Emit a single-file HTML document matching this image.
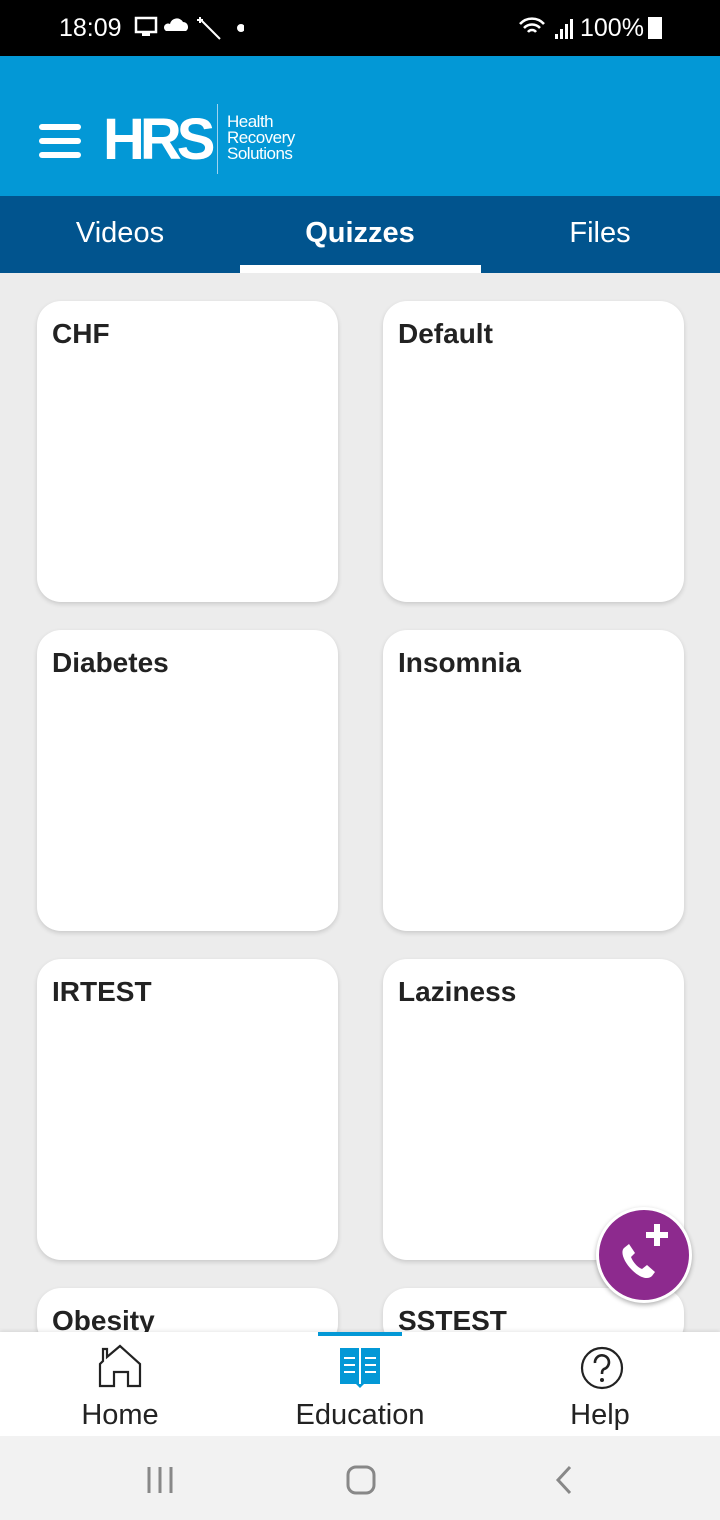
<!DOCTYPE html>
<html style="width:720px;height:1520px;overflow:hidden"><head><meta charset="utf-8"><style>
*{margin:0;padding:0;box-sizing:border-box}
body{width:720px;height:1520px;overflow:hidden;background:#ececec;font-family:"Liberation Sans","DejaVu Sans",sans-serif;position:relative}
.sb{position:absolute;top:0;left:0;width:720px;height:56px;background:#000;color:#fff;font-size:25px}
.hdr{position:absolute;top:56px;left:0;width:720px;height:140px;background:#0398d6}
.tabs{position:absolute;top:196px;left:0;width:720px;height:77px;background:#01548e;color:#fff;font-size:29px}
.tabs div{position:absolute;top:21px;width:240px;text-align:center}
.card{position:absolute;width:301px;height:301px;background:#fff;border-radius:24px;box-shadow:0 2px 5px rgba(0,0,0,.15);font-size:28px;font-weight:bold;color:#222;padding:17px 15px}
.nav{position:absolute;top:1332px;left:0;width:720px;height:104px;background:#fff;box-shadow:0 -1px 4px rgba(0,0,0,.1)}
.nav .l{position:absolute;top:67px;width:240px;text-align:center;font-size:29px;color:#222}
.sys{position:absolute;top:1436px;left:0;width:720px;height:84px;background:#f2f2f2}
</style></head><body>
<div class="sb">
<span style="position:absolute;left:59px;top:14px">18:09</span>
<svg style="position:absolute;left:134px;top:15px" width="110" height="26"><rect x="2" y="3" width="20" height="14" fill="none" stroke="#fff" stroke-width="2.5"/><rect x="8" y="18" width="8" height="3" fill="#fff"/><path d="M32 16 h20 a5 5 0 0 0 -3 -9 a7 7 0 0 0 -13 2 a4 4 0 0 0 -4 7z" fill="#fff"/><path d="M66 4 L86 24 M66 2v6M63 5h6" stroke="#fff" stroke-width="2"/><circle cx="107" cy="13" r="4" fill="#fff"/></svg>
<svg style="position:absolute;left:518px;top:16px" width="56" height="26"><path d="M2 8 a16 16 0 0 1 24 0 M6 12 a11 11 0 0 1 16 0 M10 16 a5 5 0 0 1 8 0" stroke="#fff" stroke-width="2.5" fill="none"/><rect x="37" y="18" width="3" height="5" fill="#fff"/><rect x="42" y="13" width="3" height="10" fill="#fff"/><rect x="47" y="8" width="3" height="15" fill="#fff"/><rect x="52" y="3" width="3" height="20" fill="#fff"/></svg>
<span style="position:absolute;left:580px;top:14px">100%</span>
<div style="position:absolute;left:648px;top:17px;width:14px;height:22px;background:#fff"></div>
</div>
<div class="hdr">
<div style="position:absolute;left:39px;top:68px;width:42px;height:6px;background:#fff;border-radius:3px"></div>
<div style="position:absolute;left:39px;top:82px;width:42px;height:6px;background:#fff;border-radius:3px"></div>
<div style="position:absolute;left:39px;top:96px;width:42px;height:6px;background:#fff;border-radius:3px"></div>
<div style="position:absolute;left:103px;top:54px;font-size:58px;font-weight:bold;color:#fff;letter-spacing:-5px;line-height:60px">HRS</div>
<div style="position:absolute;left:217px;top:48px;width:1px;height:70px;background:#9fd3ef"></div>
<div style="position:absolute;left:227px;top:58px;font-size:17px;color:#fff;line-height:16px;letter-spacing:-.5px">Health<br>Recovery<br>Solutions</div>
</div>
<div class="tabs"><div style="left:0">Videos</div><div style="left:240px;font-weight:bold">Quizzes</div><div style="left:480px">Files</div>
<span style="position:absolute;left:240px;top:69px;width:241px;height:8px;background:#fff"></span></div>
<div class="card" style="left:37px;top:301px">CHF</div>
<div class="card" style="left:383px;top:301px">Default</div>
<div class="card" style="left:37px;top:630px">Diabetes</div>
<div class="card" style="left:383px;top:630px">Insomnia</div>
<div class="card" style="left:37px;top:959px">IRTEST</div>
<div class="card" style="left:383px;top:959px">Laziness</div>
<div class="card" style="left:37px;top:1288px;height:60px">Obesity</div>
<div class="card" style="left:383px;top:1288px;height:60px">SSTEST</div>
<div style="position:absolute;left:596px;top:1207px;width:96px;height:96px;border-radius:50%;background:#8d2a8e;border:3px solid #fff;box-shadow:0 2px 5px rgba(0,0,0,.3)">
<svg width="90" height="90" viewBox="0 0 90 90"><path d="M25 38 c-4 4 0 14 8 22 c8 8 16 10 20 6 l3 -4 -8 -7 -5 4 c-5 -2 -9 -7 -11 -12 l4 -4 -6 -9z" fill="#fff"/><path d="M58 14 v22 M47 25 h22" stroke="#fff" stroke-width="6"/></svg></div>
<div class="nav">
<div style="position:absolute;left:318px;top:0;width:84px;height:4px;background:#0398d6"></div>
<svg style="position:absolute;left:98px;top:12px" width="46" height="46"><path d="M2 42 V20 L5 17 V5 h4 v8 L22 2 L42 20 V42 H30 V28 H16 V42 Z" fill="none" stroke="#222" stroke-width="2.2"/></svg>
<svg style="position:absolute;left:338px;top:14px" width="44" height="42"><path d="M2 2 h19 v36 h-19z M23 2 h19 v36 h-19z" fill="#0398d6"/><path d="M18 38 l4 4 l4 -4" fill="#0398d6"/><path d="M6 12h11M6 19h11M6 26h11M27 12h11M27 19h11M27 26h11" stroke="#fff" stroke-width="2"/></svg>
<svg style="position:absolute;left:579px;top:13px" width="46" height="46"><circle cx="23" cy="23" r="20" fill="none" stroke="#222" stroke-width="2.2"/><path d="M16 18 a7 7 0 1 1 9 6 c-2 1 -2 3 -2 5" fill="none" stroke="#222" stroke-width="2.6"/><circle cx="23" cy="35" r="2" fill="#222"/></svg>
<div class="l" style="left:0">Home</div><div class="l" style="left:240px">Education</div><div class="l" style="left:480px">Help</div>
</div>
<div class="sys">
<svg width="720" height="84"><path d="M149 31v26M160 31v26M171 31v26" stroke="#888" stroke-width="3"/><rect x="348" y="31" width="26" height="26" rx="8" fill="none" stroke="#888" stroke-width="3"/><path d="M570 31 L558 44 L570 57" fill="none" stroke="#888" stroke-width="3"/></svg>
</div>
</body></html>
